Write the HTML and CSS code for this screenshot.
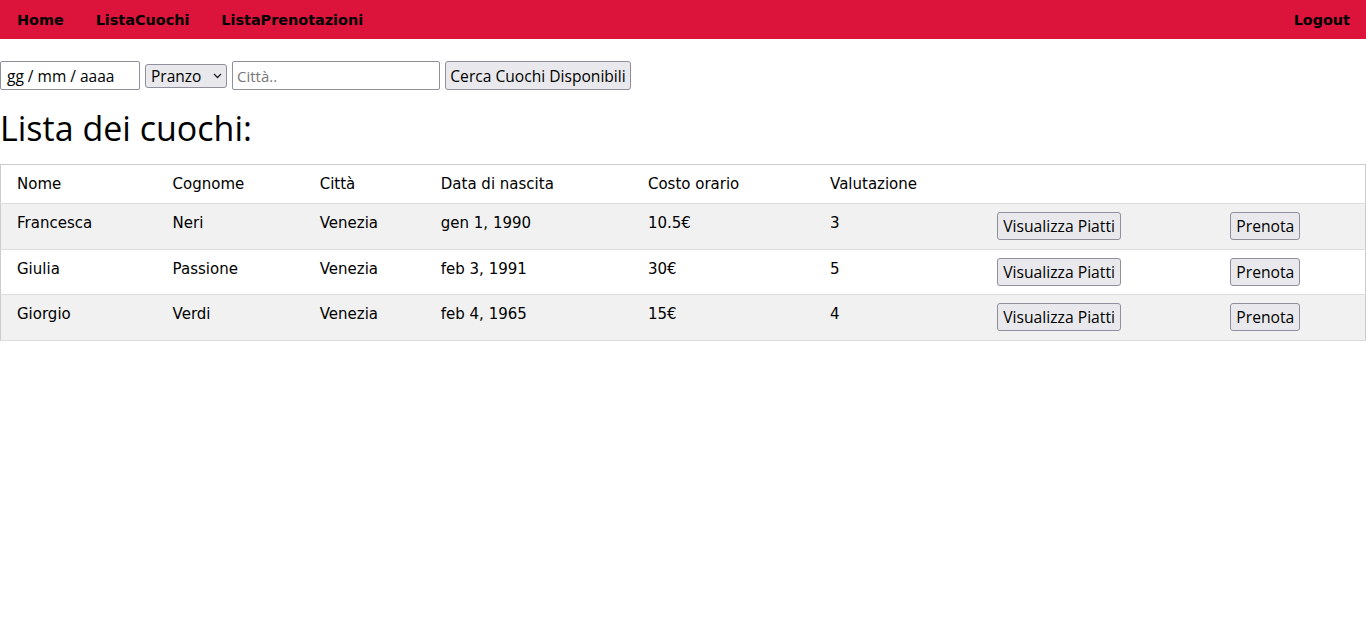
FILE: index.html
```html
<!DOCTYPE html>
<html lang="it">
<head>
<meta charset="utf-8">
<title>Lista dei cuochi</title>
<link rel="stylesheet" href="styles.css">
</head>
<body>
<nav class="topnav">
  <a href="#" class="nav-link">Home</a>
  <a href="#" class="nav-link">ListaCuochi</a>
  <a href="#" class="nav-link">ListaPrenotazioni</a>
  <a href="#" class="nav-link nav-right">Logout</a>
</nav>
<form class="search">
  <span class="date-input">gg / mm / aaaa</span>
  <span class="select-box">Pranzo <svg width="9" height="6" viewBox="0 0 9 6"><path d="M1 1 L4.5 4.5 L8 1" fill="none" stroke="#222" stroke-width="1.3"/></svg></span>
  <input class="text-input" type="text" placeholder="Città..">
  <button class="btn btn-search" type="button">Cerca Cuochi Disponibili</button>
</form>
<h2 class="title">Lista dei cuochi:</h2>
<table class="cooks">
  <colgroup>
    <col class="c1"><col class="c2"><col class="c3"><col class="c4"><col class="c5"><col class="c6"><col class="c7"><col class="c8">
  </colgroup>
  <tr class="head"><td>Nome</td><td>Cognome</td><td>Città</td><td>Data di nascita</td><td>Costo orario</td><td>Valutazione</td><td></td><td></td></tr>
  <tr class="odd"><td>Francesca</td><td>Neri</td><td>Venezia</td><td>gen 1, 1990</td><td>10.5€</td><td>3</td><td><button class="btn" type="button">Visualizza Piatti</button></td><td><button class="btn" type="button">Prenota</button></td></tr>
  <tr><td>Giulia</td><td>Passione</td><td>Venezia</td><td>feb 3, 1991</td><td>30€</td><td>5</td><td><button class="btn" type="button">Visualizza Piatti</button></td><td><button class="btn" type="button">Prenota</button></td></tr>
  <tr class="odd"><td>Giorgio</td><td>Verdi</td><td>Venezia</td><td>feb 4, 1965</td><td>15€</td><td>4</td><td><button class="btn" type="button">Visualizza Piatti</button></td><td><button class="btn" type="button">Prenota</button></td></tr>
</table>
</body>
</html>
```
FILE: styles.css
```css
html, body { margin: 0; padding: 0; background: #fff; }
body { font-family: "Open Sans", "Noto Sans", sans-serif; color: #000; }

.topnav {
  display: flex;
  background: #dc143c;
  height: 39px;
  align-items: center;
}
.nav-link {
  font-family: "DejaVu Sans", Verdana, sans-serif;
  font-weight: bold;
  font-size: 14.4px;
  color: #000;
  text-decoration: none;
  padding: 0 16px 0 17px;
}
.nav-link + .nav-link { padding-left: 16px; }
.nav-right { margin-left: auto; padding-right: 16px; }

.search {
  display: flex;
  align-items: center;
  gap: 5px;
  margin-top: 22px;
  height: 29px;
  font-size: 15.5px;
}
.date-input {
  box-sizing: border-box;
  width: 140px;
  height: 29px;
  border: 1px solid #8f8f9d;
  border-radius: 2px;
  padding: 0 6px;
  display: flex;
  align-items: center;
  font-size: 15.5px;
}
.select-box {
  box-sizing: border-box;
  width: 82px;
  height: 24px;
  border: 1px solid #8f8f9d;
  border-radius: 3px;
  background: #e9e9ed;
  padding: 0 4px 0 5px;
  display: flex;
  align-items: center;
  justify-content: space-between;
}
.text-input {
  box-sizing: border-box;
  width: 208px;
  height: 29px;
  border: 1px solid #8f8f9d;
  border-radius: 2px;
  padding: 0 4px;
  font-family: "Open Sans", sans-serif;
  font-size: 15px;
  margin: 0;
}
.text-input::placeholder { color: #777; }

.btn {
  box-sizing: border-box;
  background: #e9e9ed;
  border: 1px solid #8f8f9d;
  border-radius: 3px;
  font-family: "Open Sans", sans-serif;
  font-size: 15.7px;
  color: #000;
  padding: 0 5px;
  height: 28px;
  margin: 0;
}
.btn-search { height: 29px; width: 186px; font-size: 15.6px; padding: 0 4px; }

.title {
  font-weight: normal;
  font-size: 34px;
  margin: 16px 0 14px 0;
  line-height: 44px;
}

.cooks {
  width: 100%;
  border-collapse: collapse;
  border: 1px solid #ccc;
  table-layout: fixed;
  font-family: "DejaVu Sans", Verdana, sans-serif;
  font-size: 15px;
}
.cooks td {
  padding: 8px 16px;
  vertical-align: top;
  text-align: left;
  border-bottom: 1px solid #ddd;
  line-height: 22px;
}
.cooks tr.head td { padding: 8px 16px 8px; }
.cooks tr:not(.head) td { padding: 8px 16px; }
.cooks tr:not(.head) td:nth-child(n+7) { padding-top: 8px; padding-bottom: 8px; }
.cooks tr.odd td:nth-child(n+7) { padding-bottom: 9px; }
.cooks tr.odd { background: #f1f1f1; }
.c1 { width: 156px; }
.c2 { width: 147px; }
.c3 { width: 121px; }
.c4 { width: 207px; }
.c5 { width: 182px; }
.c6 { width: 167px; }
.c7 { width: 233px; }
.c8 { width: 151px; }
```
